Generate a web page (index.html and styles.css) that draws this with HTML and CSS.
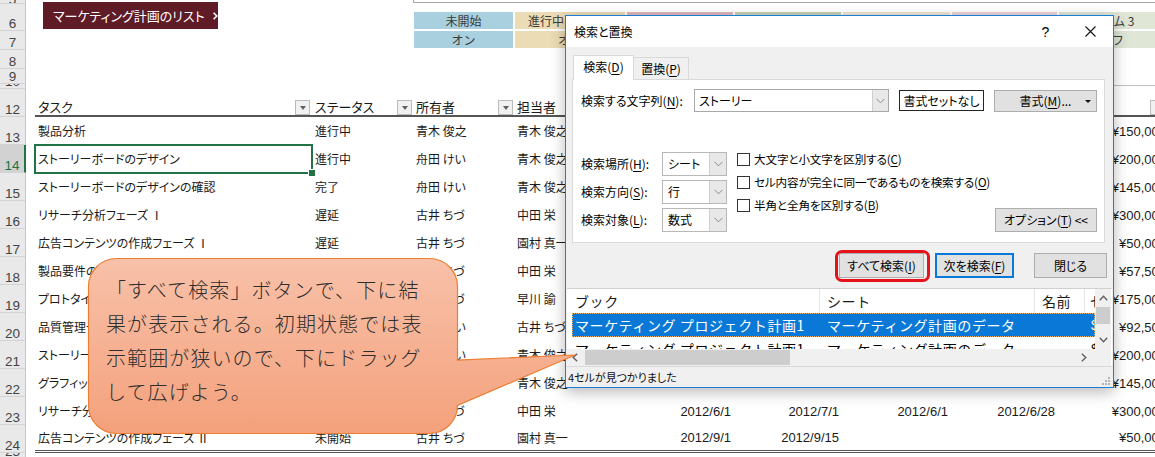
FILE: index.html
```html
<!DOCTYPE html>
<html lang="ja">
<head>
<meta charset="utf-8">
<title>検索と置換</title>
<link rel="stylesheet" href="styles.css">
</head>
<body>
<div class="sheet">
  <div class="top">
    <div class="rhcol">
      <div class="rh h5">5</div>
      <div class="rh h6">6</div>
      <div class="rh h7">7</div>
      <div class="rh h8">8</div>
      <div class="rh h9">9</div>
      <div class="rh h10">10</div>
    </div>
    <div class="topcontent">
      <div class="listbtn">マーケティング計画のリスト<svg class="chev" width="8" height="10" viewBox="0 0 8 10"><polyline points="2,1 6,5 2,9" fill="none" stroke="#fff" stroke-width="2"/></svg></div>
      <div class="legend">
        <div class="legend-rule"></div>
        <div class="legend-grid">
          <div class="lg lg1">未開始</div>
          <div class="lg lg2">進行中のタスク</div>
          <div class="lg lg3">遅延</div>
          <div class="lg lg4">完了</div>
          <div class="lg lg5">チーム 1</div>
          <div class="lg lg6">チーム 2</div>
          <div class="lg lg7">チーム 3</div>
          <div class="lg lg1">オン</div>
          <div class="lg lg2">オン</div>
          <div class="lg lg3">オン</div>
          <div class="lg lg4">オン</div>
          <div class="lg lg5">オフ</div>
          <div class="lg lg6">オフ</div>
          <div class="lg lg7">オフ</div>
        </div>
        <div class="legend-line"></div>
      </div>
    </div>
  </div>

  <div class="row hdr"><div class="rh">12</div><div class="cells">
    <div class="c w-task"><span>タスク</span><span class="flt"></span></div>
    <div class="c w-st"><span>ステータス</span><span class="flt"></span></div>
    <div class="c w-ow"><span>所有者</span><span class="flt"></span></div>
    <div class="c w-as"><span>担当者</span><span class="flt"></span></div>
    <div class="c w-d1"><span>開始日</span><span class="flt"></span></div>
    <div class="c w-d2"><span>終了日</span><span class="flt"></span></div>
    <div class="c w-d3"><span>実際の開始日</span><span class="flt"></span></div>
    <div class="c w-d4"><span>実際の終了日</span><span class="flt"></span></div>
    <div class="c w-pr"><span>予算</span><span class="flt"></span></div>
  </div></div>

  <div class="row"><div class="rh">13</div><div class="cells">
    <div class="c w-task">製品分析</div><div class="c w-st">進行中</div><div class="c w-ow">青木 俊之</div><div class="c w-as">青木 俊之</div>
    <div class="c num w-d1">2012/1/1</div><div class="c num w-d2">2012/1/31</div><div class="c num w-d3">2012/1/1</div><div class="c num w-d4">2012/1/31</div><div class="c num w-pr">¥150,000</div>
  </div></div>

  <div class="row"><div class="rh cur">14</div><div class="cells">
    <div class="c w-task sel">ストーリーボードのデザイン</div><div class="c w-st">進行中</div><div class="c w-ow">舟田 けい</div><div class="c w-as">青木 俊之</div>
    <div class="c num w-d1">2012/2/1</div><div class="c num w-d2">2012/2/28</div><div class="c num w-d3">2012/2/1</div><div class="c num w-d4">2012/2/28</div><div class="c num w-pr">¥200,000</div>
  </div></div>

  <div class="row"><div class="rh">15</div><div class="cells">
    <div class="c w-task">ストーリーボードのデザインの確認</div><div class="c w-st">完了</div><div class="c w-ow">舟田 けい</div><div class="c w-as">青木 俊之</div>
    <div class="c num w-d1">2012/3/1</div><div class="c num w-d2">2012/3/15</div><div class="c num w-d3">2012/3/1</div><div class="c num w-d4">2012/3/15</div><div class="c num w-pr">¥145,000</div>
  </div></div>

  <div class="row"><div class="rh">16</div><div class="cells">
    <div class="c w-task">リサーチ分析フェーズ Ⅰ</div><div class="c w-st">遅延</div><div class="c w-ow">古井 ちづ</div><div class="c w-as">中田 栄</div>
    <div class="c num w-d1">2012/3/1</div><div class="c num w-d2">2012/4/1</div><div class="c num w-d3">2012/3/5</div><div class="c num w-d4">2012/4/10</div><div class="c num w-pr">¥300,000</div>
  </div></div>

  <div class="row"><div class="rh">17</div><div class="cells">
    <div class="c w-task">広告コンテンツの作成フェーズ Ⅰ</div><div class="c w-st">遅延</div><div class="c w-ow">古井 ちづ</div><div class="c w-as">園村 真一</div>
    <div class="c num w-d1">2012/4/1</div><div class="c num w-d2">2012/4/15</div><div class="c num w-d3">2012/4/5</div><div class="c num w-d4">2012/4/20</div><div class="c num w-pr">¥50,000</div>
  </div></div>

  <div class="row"><div class="rh">18</div><div class="cells">
    <div class="c w-task">製品要件の定義</div><div class="c w-st">進行中</div><div class="c w-ow">古井 ちづ</div><div class="c w-as">中田 栄</div>
    <div class="c num w-d1">2012/4/15</div><div class="c num w-d2">2012/5/1</div><div class="c num w-d3">2012/4/15</div><div class="c num w-d4"></div><div class="c num w-pr">¥57,500</div>
  </div></div>

  <div class="row"><div class="rh">19</div><div class="cells">
    <div class="c w-task">プロトタイプの作成</div><div class="c w-st">進行中</div><div class="c w-ow">古井 ちづ</div><div class="c w-as">早川 諭</div>
    <div class="c num w-d1">2012/5/1</div><div class="c num w-d2">2012/5/31</div><div class="c num w-d3">2012/5/1</div><div class="c num w-d4"></div><div class="c num w-pr">¥175,000</div>
  </div></div>

  <div class="row"><div class="rh">20</div><div class="cells">
    <div class="c w-task">品質管理テスト</div><div class="c w-st">未開始</div><div class="c w-ow">舟田 けい</div><div class="c w-as">古井 ちづ</div>
    <div class="c num w-d1">2012/5/15</div><div class="c num w-d2">2012/6/1</div><div class="c num w-d3"></div><div class="c num w-d4"></div><div class="c num w-pr">¥92,500</div>
  </div></div>

  <div class="row"><div class="rh">21</div><div class="cells">
    <div class="c w-task">ストーリーボードの修正</div><div class="c w-st">未開始</div><div class="c w-ow">舟田 けい</div><div class="c w-as">青木 俊之</div>
    <div class="c num w-d1">2012/6/1</div><div class="c num w-d2">2012/6/15</div><div class="c num w-d3"></div><div class="c num w-d4"></div><div class="c num w-pr">¥200,000</div>
  </div></div>

  <div class="row"><div class="rh">22</div><div class="cells">
    <div class="c w-task">グラフィックデザイン</div><div class="c w-st">未開始</div><div class="c w-ow">古井 ちづ</div><div class="c w-as">青木 俊之</div>
    <div class="c num w-d1">2012/6/1</div><div class="c num w-d2">2012/6/30</div><div class="c num w-d3"></div><div class="c num w-d4"></div><div class="c num w-pr">¥145,000</div>
  </div></div>

  <div class="row"><div class="rh">23</div><div class="cells">
    <div class="c w-task">リサーチ分析フェーズ Ⅱ</div><div class="c w-st">未開始</div><div class="c w-ow">古井 ちづ</div><div class="c w-as">中田 栄</div>
    <div class="c num w-d1">2012/6/1</div><div class="c num w-d2">2012/7/1</div><div class="c num w-d3">2012/6/1</div><div class="c num w-d4">2012/6/28</div><div class="c num w-pr">¥300,000</div>
  </div></div>

  <div class="row last"><div class="rh">24</div><div class="cells">
    <div class="c w-task">広告コンテンツの作成フェーズ Ⅱ</div><div class="c w-st">未開始</div><div class="c w-ow">古井 ちづ</div><div class="c w-as">園村 真一</div>
    <div class="c num w-d1">2012/9/1</div><div class="c num w-d2">2012/9/15</div><div class="c num w-d3"></div><div class="c num w-d4"></div><div class="c num w-pr">¥50,000</div>
  </div></div>

  <div class="row r25"><div class="rh">25</div></div>
</div>

<div class="dialog">
  <div class="titlebar">
    <span class="title">検索と置換</span>
    <span class="tbtn help">?</span>
    <span class="tbtn"><svg width="11" height="11" viewBox="0 0 11 11"><path d="M0.5 0.5 L10.5 10.5 M10.5 0.5 L0.5 10.5" stroke="#111" stroke-width="1.1"/></svg></span>
  </div>
  <div class="dbody">
    <div class="tabs">
      <div class="tab active">検索(<u>D</u>)</div>
      <div class="tab">置換(<u>P</u>)</div>
    </div>
    <div class="panel">
      <div class="findrow">
        <span class="lbl1">検索する文字列(<u>N</u>):</span>
        <div class="combo big"><span class="val">ストーリー</span><span class="dd"><svg width="9" height="6" viewBox="0 0 9 6"><polyline points="0.5,0.8 4.5,4.8 8.5,0.8" fill="none" stroke="#8a8a8a" stroke-width="1"/></svg></span></div>
        <div class="btn nofmt">書式セットなし</div>
        <div class="btn fmt">書式(<u>M</u>)...<span class="caret"></span></div>
      </div>
      <div class="optrow">
        <div class="opts">
          <div class="opt"><span class="lbl2">検索場所(<u>H</u>):</span><div class="combo sm"><span class="val">シート</span><span class="dd"><svg width="9" height="6" viewBox="0 0 9 6"><polyline points="0.5,0.8 4.5,4.8 8.5,0.8" fill="none" stroke="#8a8a8a" stroke-width="1"/></svg></span></div></div>
          <div class="opt"><span class="lbl2">検索方向(<u>S</u>):</span><div class="combo sm"><span class="val">行</span><span class="dd"><svg width="9" height="6" viewBox="0 0 9 6"><polyline points="0.5,0.8 4.5,4.8 8.5,0.8" fill="none" stroke="#8a8a8a" stroke-width="1"/></svg></span></div></div>
          <div class="opt"><span class="lbl2">検索対象(<u>L</u>):</span><div class="combo sm"><span class="val">数式</span><span class="dd"><svg width="9" height="6" viewBox="0 0 9 6"><polyline points="0.5,0.8 4.5,4.8 8.5,0.8" fill="none" stroke="#8a8a8a" stroke-width="1"/></svg></span></div></div>
        </div>
        <div class="checks">
          <div class="chk"><span class="box"></span>大文字と小文字を区別する(<u>C</u>)</div>
          <div class="chk"><span class="box"></span>セル内容が完全に同一であるものを検索する(<u>O</u>)</div>
          <div class="chk"><span class="box"></span>半角と全角を区別する(<u>B</u>)</div>
        </div>
        <div class="btn optbtn">オプション(<u>T</u>) &lt;&lt;</div>
      </div>
    </div>
    <div class="actions">
      <div class="btn b-all">すべて検索(<u>I</u>)<span class="hilite"></span></div>
      <div class="btn b-next">次を検索(<u>F</u>)</div>
      <div class="btn b-close">閉じる</div>
    </div>
    <div class="results">
      <div class="list">
        <div class="lhead">
          <div class="lc lc1">ブック</div>
          <div class="lc lc2">シート</div>
          <div class="lc lc3">名前</div>
          <div class="lc lc4">セル</div>
        </div>
        <div class="lrow selrow">
          <div class="rc rc1">マーケティング プロジェクト計画1</div>
          <div class="rc rc2">マーケティング計画のデータ</div>
          <div class="rc rc3"></div>
          <div class="rc rc4">$A$14</div>
        </div>
        <div class="lrow">
          <div class="rc rc1">マーケティング プロジェクト計画1</div>
          <div class="rc rc2">マーケティング計画のデータ</div>
          <div class="rc rc3"></div>
          <div class="rc rc4">$A$15</div>
        </div>
      </div>
      <div class="vscroll">
        <span class="arr"><svg width="9" height="6" viewBox="0 0 9 6"><polyline points="0.8,5.2 4.5,1.2 8.2,5.2" fill="none" stroke="#606060" stroke-width="1.4"/></svg></span>
        <span class="vthumb"></span>
        <span class="arr down"><svg width="9" height="6" viewBox="0 0 9 6"><polyline points="0.8,0.8 4.5,4.8 8.2,0.8" fill="none" stroke="#606060" stroke-width="1.4"/></svg></span>
      </div>
      <div class="hscroll">
        <span class="harr"><svg width="6" height="9" viewBox="0 0 6 9"><polyline points="5.2,0.8 1.2,4.5 5.2,8.2" fill="none" stroke="#606060" stroke-width="1.4"/></svg></span>
        <span class="hthumb"></span>
        <span class="harr right"><svg width="6" height="9" viewBox="0 0 6 9"><polyline points="0.8,0.8 4.8,4.5 0.8,8.2" fill="none" stroke="#606060" stroke-width="1.4"/></svg></span>
      </div>
      <div class="corner"></div>
    </div>
  </div>
  <div class="status">4セルが見つかりました
    <svg class="grip" width="9" height="9" viewBox="0 0 9 9"><g fill="#b5b5b5"><rect x="7" y="1" width="2" height="2"/><rect x="4" y="4" width="2" height="2"/><rect x="7" y="4" width="2" height="2"/><rect x="1" y="7" width="2" height="2"/><rect x="4" y="7" width="2" height="2"/><rect x="7" y="7" width="2" height="2"/></g></svg>
  </div>
</div>

<div class="callout">
  <svg class="callout-shape" width="492" height="178" viewBox="0 0 492 178">
    <defs>
      <linearGradient id="cg" x1="0" y1="0" x2="0" y2="1">
        <stop offset="0" stop-color="#f8c1a9"/>
        <stop offset="1" stop-color="#f4a17c"/>
      </linearGradient>
    </defs>
    <path d="M28.5,0.5 H341.5 A28,28 0 0 1 369.5,28.5 V102 L487,97 L369.5,147.5 A28,28 0 0 1 341.5,175.5 H28.5 A28,28 0 0 1 0.5,147.5 V28.5 A28,28 0 0 1 28.5,0.5 Z" fill="url(#cg)" stroke="#ed7d31" stroke-width="1.2"/>
  </svg>
  <p class="callout-text">「すべて検索」ボタンで、下に結<br>果が表示される。初期状態では表<br>示範囲が狭いので、下にドラッグ<br>して広げよう。</p>
</div>
</body>
</html>
```

FILE: styles.css
```css
* { box-sizing: border-box; }
html, body { margin: 0; padding: 0; }
body {
  width: 1155px;
  height: 457px;
  overflow: hidden;
  position: relative;
  background: #fff;
  font-family: "Noto Sans CJK JP", "Noto Sans", sans-serif;
  color: #222;
}

/* ---------- sheet ---------- */
.sheet { display: flex; flex-direction: column; }
.top { display: flex; height: 89px; flex: none; }
.rhcol { width: 26px; flex: none; display: flex; flex-direction: column; }
.rh {
  width: 26px;
  flex: none;
  background: #e9e9e9;
  border-right: 1px solid #c6c6c6;
  border-bottom: 1px solid #d3d3d3;
  display: flex;
  align-items: flex-end;
  justify-content: center;
  font-family: "Liberation Sans", Arial, sans-serif;
  font-size: 13.5px;
  line-height: 13px;
  color: #444;
  overflow: hidden;
}
.h5 { height: 4px; line-height: 7px; }
.h6 { height: 27px; }
.h7 { height: 19px; }
.h8 { height: 19px; }
.h9 { height: 15px; }
.h10 { height: 5px; }
.rh.cur { background: #d2d2d2; color: #217346; border-right: 2px solid #217346; }

.topcontent { flex: 1; display: flex; align-items: flex-start; }
.listbtn {
  flex: none;
  margin-left: 17px;
  margin-top: 2px;
  width: 175px;
  height: 27px;
  background: #5f1b26;
  color: #fff;
  font-size: 13px;
  line-height: 1;
  font-feature-settings: "palt";
  display: flex;
  align-items: center;
  padding-left: 10px;
  white-space: nowrap;
}
.chev { margin-left: 7px; }

.legend { flex: none; margin-left: 195px; width: 760px; display: flex; flex-direction: column; }
.legend-rule { height: 3px; width: 100%; border-left: 1px solid #a6a6a6; border-bottom: 1px solid #a6a6a6; }
.legend-grid {
  margin-top: 9px;
  display: grid;
  grid-template-columns: 101px 112px 108px 108px 109px 107px 108px;
  grid-template-rows: 17px 17px;
  row-gap: 2px;
}
.lg {
  margin: 0 1px;
  font-size: 12px;
  line-height: 1;
  color: #3a3a3a;
  display: flex;
  align-items: center;
  justify-content: center;
  white-space: nowrap;
  overflow: hidden;
}
.lg1 { background: #a9d0de; }
.lg2 { background: #ecdcb5; }
.lg3 { background: #dfb7bb; }
.lg4 { background: #c6d1b6; }
.lg5 { background: #f0e4d4; }
.lg6 { background: #ecd3d7; }
.lg7 { background: #dfe6d5; }
.legend-line { margin-top: 37px; margin-left: 213px; border-top: 1px solid #bfbfbf; }

.row { display: flex; height: 28px; flex: none; }
.row .rh { height: 28px; }
.cells { display: flex; margin-left: 9px; flex: none; }
.c {
  flex: none;
  height: 100%;
  display: flex;
  align-items: center;
  padding-left: 3px;
  white-space: nowrap;
  overflow: hidden;
  font-size: 12px;
  line-height: 1;
  color: #1a1a1a;
  font-feature-settings: "palt";
}
.w-task { width: 277px; }
.w-st { width: 101px; }
.w-ow { width: 101px; }
.w-as { width: 112px; }
.w-d1 { width: 108px; }
.w-d2 { width: 108px; }
.w-d3 { width: 109px; }
.w-d4 { width: 107px; }
.w-pr { width: 108px; }
.num {
  justify-content: flex-end;
  padding-left: 0;
  padding-right: 3px;
  font-family: "Liberation Sans", Arial, sans-serif;
  font-size: 13px;
}
.w-pr.num { padding-right: 0; }

.hdr .cells { border-bottom: 2px solid #555; }
.hdr .c { align-items: flex-end; padding-bottom: 2px; font-size: 13px; }
.flt {
  margin-left: auto;
  margin-right: 1px;
  margin-bottom: -2px;
  width: 15px;
  height: 15px;
  flex: none;
  border: 1px solid #bcbcbc;
  background: #f1f1f1;
  display: flex;
  align-items: center;
  justify-content: center;
}
.flt::after {
  content: "";
  border-left: 3.5px solid transparent;
  border-right: 3.5px solid transparent;
  border-top: 4px solid #606060;
}
.w-task .flt { margin-right: 2px; }

.sel { position: relative; outline: 2px solid #217346; outline-offset: -1px; overflow: visible; }
.sel::after {
  content: "";
  position: absolute;
  right: -4px;
  bottom: -4px;
  width: 6px;
  height: 6px;
  background: #217346;
  border: 1px solid #fff;
}
.last .cells { border-bottom: 3px double #555; }
.r25 { height: 6px; }
.r25 .rh { height: 6px; }

/* ---------- dialog ---------- */
.dialog {
  position: absolute;
  left: 565px;
  top: 15px;
  width: 549px;
  height: 373px;
  border: 1px solid #1a7fd4;
  background: #f0f0f0;
  box-shadow: 0 4px 14px rgba(0, 0, 0, 0.28);
  display: flex;
  flex-direction: column;
  font-size: 12px;
  line-height: 1;
  color: #000;
  font-feature-settings: "palt";
}
.dialog u { text-decoration: underline; text-underline-offset: 2px; }
.titlebar { height: 31px; flex: none; background: #fff; display: flex; align-items: center; }
.title { flex: 1; padding-left: 8px; }
.tbtn { width: 45px; height: 31px; display: flex; align-items: center; justify-content: center; }
.help { font-family: "Liberation Sans", Arial, sans-serif; font-size: 14px; }

.dbody { flex: 1; display: flex; flex-direction: column; padding-top: 8px; }
.tabs { display: flex; align-items: flex-end; margin-left: 7px; height: 25px; margin-bottom: -1px; position: relative; z-index: 1; }
.tab {
  height: 22px;
  width: 55px;
  margin-bottom: 1px;
  background: #f0f0f0;
  border: 1px solid #d9d9d9;
  border-bottom: none;
  border-left: none;
  display: flex;
  align-items: center;
  justify-content: center;
  padding-top: 1px;
}
.tab.active { width: 61px; height: 25px; margin-bottom: 0; background: #fff; border-left: 1px solid #d9d9d9; padding-top: 0; padding-bottom: 2px; }

.panel {
  margin-left: 6px;
  width: 533px;
  height: 164px;
  flex: none;
  background: #fff;
  border: 1px solid #d9d9d9;
  padding: 9px 7px 0 8px;
  display: flex;
  flex-direction: column;
}
.findrow { display: flex; align-items: center; height: 23px; }
.lbl1 { width: 113px; flex: none; white-space: nowrap; }
.combo { display: flex; background: #fff; border: 1px solid #b8b8b8; flex: none; }
.combo .val { flex: 1; display: flex; align-items: center; padding-left: 4px; white-space: nowrap; }
.combo .dd { flex: none; width: 17px; background: #e8e8e8; border-left: 1px solid #cfcfcf; display: flex; align-items: center; justify-content: center; }
.combo.big { width: 195px; height: 23px; border-color: #a8a8a8; }
.combo.big .dd { width: 16px; }
.combo.sm { width: 65px; height: 24px; }
.combo.sm .val { padding-left: 5px; }

.btn {
  flex: none;
  display: flex;
  align-items: center;
  justify-content: center;
  background: #e1e1e1;
  border: 1px solid #adadad;
  white-space: nowrap;
  position: relative;
}
.nofmt { margin-left: 10px; width: 85px; height: 21px; background: #fff; border: 1px solid #262626; }
.fmt { margin-left: 10px; width: 103px; height: 22px; }
.caret {
  position: absolute;
  right: 5px;
  top: 9px;
  border-left: 3px solid transparent;
  border-right: 3px solid transparent;
  border-top: 3px solid #111;
}

.optrow { display: flex; margin-top: 40px; }
.opts { display: flex; flex-direction: column; row-gap: 4px; flex: none; }
.opt { display: flex; align-items: center; height: 24px; }
.lbl2 { width: 81px; flex: none; white-space: nowrap; }
.checks { margin-left: 10px; margin-top: -4px; display: flex; flex-direction: column; flex: 1 1 0; min-width: 0; }
.chk { height: 23px; display: flex; align-items: center; white-space: nowrap; font-size: 11.6px; letter-spacing: -0.15px; }
.chk .box { width: 13px; height: 13px; border: 1px solid #333; background: #fff; margin-right: 4px; flex: none; }
.optbtn { align-self: flex-end; width: 102px; height: 24px; }

.actions { display: flex; justify-content: flex-end; margin-top: 10px; margin-right: 6px; height: 25px; flex: none; }
.b-all { width: 85px; height: 25px; }
.hilite {
  position: absolute;
  left: -5px;
  top: -4px;
  right: -7px;
  bottom: -5px;
  border: 3px solid #e5121c;
  border-radius: 7px;
}
.b-next { margin-left: 11px; width: 79px; height: 25px; border: 2px solid #0a78d7; }
.b-close { margin-left: 20px; width: 73px; height: 25px; }

.results {
  margin-top: 10px;
  margin-left: 1px;
  width: 545px;
  height: 78px;
  flex: none;
  background: #fff;
  border-top: 1px solid #d0d0d0;
  display: grid;
  grid-template-columns: 528px 16px;
  grid-template-rows: 60px 17px;
  font-size: 14px;
  font-feature-settings: normal;
}
.list { overflow: hidden; }
.lhead { display: flex; height: 24px; }
.lc { flex: none; display: flex; align-items: center; border-right: 1px solid #e5e5e5; white-space: nowrap; letter-spacing: 0.6px; color: #1a1a1a; }
.lc1 { width: 253px; padding-left: 8px; }
.lc2 { width: 215px; padding-left: 7px; }
.lc3 { width: 50px; padding-left: 7px; }
.lc4 { width: 40px; padding-left: 5px; border-right: none; }
.lrow { display: flex; height: 24px; margin-left: 5px; width: 523px; white-space: nowrap; }
.rc { flex: none; display: flex; align-items: center; letter-spacing: 0.6px; overflow: hidden; }
.rc1 { width: 248px; padding-left: 3px; }
.rc2 { width: 215px; padding-left: 7px; }
.rc3 { width: 50px; }
.rc4 { width: 10px; padding-left: 6px; font-family: "Liberation Sans", Arial, sans-serif; }
.selrow { background: #0a78d7; color: #fff; outline: 1px dotted #e9b46e; outline-offset: -1px; }
.vscroll { background: #f0f0f0; display: flex; flex-direction: column; align-items: center; }
.arr { height: 17px; width: 16px; display: flex; align-items: center; justify-content: center; flex: none; }
.vthumb { width: 14px; height: 17px; background: #cdcdcd; flex: none; margin-top: 1px; }
.arr.down { margin-top: auto; height: 18px; }
.hscroll { background: #f0f0f0; display: flex; align-items: center; }
.harr { width: 16px; height: 17px; display: flex; align-items: center; justify-content: center; flex: none; }
.hthumb { margin-left: 2px; width: 205px; height: 15px; background: #cdcdcd; flex: none; }
.harr.right { margin-left: auto; margin-right: 3px; }
.corner { background: #f0f0f0; }

.status {
  height: 21px;
  flex: none;
  border-top: 1px solid #d9d9d9;
  font-size: 11px;
  padding-left: 2px;
  display: flex;
  align-items: center;
  position: relative;
  color: #111;
}
.grip { position: absolute; right: 3px; bottom: 2px; }

/* ---------- callout ---------- */
.callout { position: absolute; left: 88px; top: 258px; width: 370px; height: 176px; }
.callout-shape { position: absolute; left: 0; top: 0; overflow: visible; }
.callout-text {
  position: relative;
  margin: 0;
  padding: 15px 0 0 18px;
  font-size: 20px;
  line-height: 34px;
  letter-spacing: 1.1px;
  font-weight: 300;
  color: #2e2e2e;
  white-space: nowrap;
}
```
